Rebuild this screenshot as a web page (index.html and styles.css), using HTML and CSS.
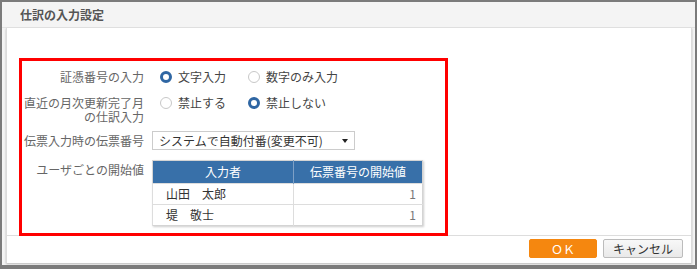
FILE: index.html
```html
<!DOCTYPE html>
<html lang="ja">
<head>
    <meta charset="UTF-8">
    <title>仕訳の入力設定</title>
    <link rel="stylesheet" href="styles.css">
</head>
<body>
    <div class="dialog">
        <header class="dialog-title">仕訳の入力設定</header>

        <div class="panel">
            <main class="content">
                <div class="settings">
                    <div class="row">
                        <div class="label">証憑番号の入力</div>
                        <div class="options">
                            <span class="radio checked"></span><span class="option-text">文字入力</span>
                            <span class="radio"></span><span class="option-text">数字のみ入力</span>
                        </div>
                    </div>

                    <div class="row row-lock">
                        <div class="label">直近の月次更新完了月<br>の仕訳入力</div>
                        <div class="options">
                            <span class="radio"></span><span class="option-text">禁止する</span>
                            <span class="radio checked"></span><span class="option-text">禁止しない</span>
                        </div>
                    </div>

                    <div class="row row-select">
                        <div class="label label-pad">伝票入力時の伝票番号</div>
                        <div class="select">
                            <span>システムで自動付番(変更不可)</span>
                            <span class="arrow"></span>
                        </div>
                    </div>

                    <div class="row row-table">
                        <div class="label label-pad">ユーザごとの開始値</div>
                        <table class="users">
                            <thead>
                                <tr>
                                    <th class="col-name">入力者</th>
                                    <th class="col-start">伝票番号の開始値</th>
                                </tr>
                            </thead>
                            <tbody>
                                <tr>
                                    <td>山田　太郎</td>
                                    <td class="num">1</td>
                                </tr>
                                <tr>
                                    <td>堤　敬士</td>
                                    <td class="num">1</td>
                                </tr>
                            </tbody>
                        </table>
                    </div>
                </div>
            </main>

            <footer class="buttons">
                <button class="btn btn-ok">ＯＫ</button>
                <button class="btn btn-cancel">キャンセル</button>
            </footer>
        </div>
    </div>
</body>
</html>
```

FILE: styles.css
```css
body {
    margin: 0;
    background-color: #7b7b7b;
    font-family: "Noto Sans CJK JP", "Noto Sans", sans-serif;
    font-size: 12px;
    color: #333;
}

.dialog {
    margin: 2px 2px 0 2px;
    height: 263px;
    background-color: #f4f4f4;
}

.dialog-title {
    height: 25px;
    line-height: 25px;
    padding-left: 18px;
    border-bottom: 1px solid #e3e3e3;
    font-weight: bold;
    color: #555;
}

.panel {
    margin: 0 3px 0 4px;
    height: 235px;
    background-color: #fff;
    border-left: 1px solid #dcdcdc;
    border-right: 1px solid #dcdcdc;
    box-shadow: 0 1px 2px rgba(0, 0, 0, 0.25);
}

.content {
    height: 208px;
    padding: 30px 0 0 12px;
    box-sizing: border-box;
    border-bottom: 1px solid #ddd;
}

.settings {
    width: 423px;
    padding: 9px 0 7px 0;
    border: 3px solid #ff0000;
}

.row {
    display: flex;
    align-items: flex-start;
    line-height: 14px;
}

.row-lock {
    margin-top: 12px;
}

.row-select {
    margin-top: 7px;
}

.row-table {
    margin-top: 10px;
}

.label {
    width: 122px;
    margin-right: 8px;
    text-align: right;
    color: #666;
}

.label-pad {
    padding-top: 3px;
}

.options {
    display: flex;
    align-items: center;
    height: 14px;
    padding-left: 8px;
}

.radio {
    width: 12px;
    height: 12px;
    box-sizing: border-box;
    border: 1px solid #c8c8c8;
    border-radius: 50%;
    background-color: #fff;
}

.radio.checked {
    border: 3.5px solid #2f66a3;
}

.option-text {
    margin-left: 6px;
    margin-right: 22px;
    color: #444;
}

.select {
    display: flex;
    align-items: center;
    justify-content: space-between;
    width: 203px;
    height: 19px;
    box-sizing: border-box;
    padding: 0 6px;
    border: 1px solid #ccc;
    color: #333;
}

.arrow {
    width: 0;
    height: 0;
    border-left: 3px solid transparent;
    border-right: 3px solid transparent;
    border-top: 4px solid #222;
}

.users {
    width: 271px;
    border-collapse: collapse;
    border: 1px solid #d4d4d4;
    box-shadow: 1px 1px 2px rgba(0, 0, 0, 0.2);
}

.users th {
    height: 22px;
    padding: 0;
    background-color: #3870a9;
    color: #fff;
    font-weight: normal;
    border-left: 1px solid #7ea0c6;
}

.users th:first-child {
    border-left: none;
}

.col-name {
    width: 140px;
}

.users td {
    height: 20px;
    padding: 0 0 0 13px;
    border-top: 1px solid #ddd;
    border-left: 1px solid #ddd;
    color: #333;
}

.users td.num {
    text-align: right;
    padding: 0 6px 0 0;
    color: #777;
}

.buttons {
    display: flex;
    justify-content: flex-end;
    gap: 6px;
    padding: 3px 8px 0 0;
}

.btn {
    height: 19px;
    padding: 0;
    font-family: inherit;
    font-size: 12px;
    line-height: 17px;
    border-radius: 2px;
    cursor: pointer;
}

.btn-ok {
    width: 68px;
    background-color: #f5870f;
    border: 1px solid #f5870f;
    color: #fff;
}

.btn-cancel {
    width: 80px;
    background: linear-gradient(#f8f8f8, #e9e9e9);
    border: 1px solid #bcbcbc;
    color: #333;
}
```
